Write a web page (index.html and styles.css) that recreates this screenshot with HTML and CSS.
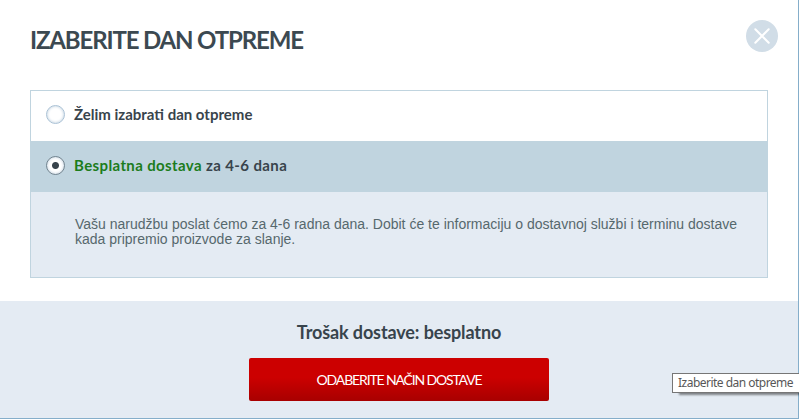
FILE: index.html
```html
<!doctype html>
<html lang="hr">
<head>
  <meta charset="UTF-8">
  <title>Izaberite dan otpreme</title>
  <link rel="stylesheet" href="styles.css">
</head>
<body>
  <form class="dialog">
    <header class="dialog-header">
      <h1>IZABERITE DAN OTPREME</h1>
      <button type="button" class="close" aria-label="Zatvori">
        <svg width="32" height="32" viewBox="0 0 32 32">
          <circle cx="16" cy="16" r="16" fill="#d1dde7"/>
          <path d="M9.3 9.3L22.7 22.7M22.7 9.3L9.3 22.7" stroke="#fff" stroke-width="2" stroke-linecap="round"/>
        </svg>
      </button>
    </header>
    <div class="options">
      <label class="option">
        <input type="radio" name="delivery">
        <span class="label-pick">Želim izabrati dan otpreme</span>
      </label>
      <label class="option selected">
        <input type="radio" name="delivery" checked>
        <span class="label-free"><span class="free">Besplatna dostava</span> za 4-6 dana</span>
      </label>
      <p class="description">Vašu narudžbu poslat ćemo za 4-6 radna dana. Dobit će te informaciju o dostavnoj službi i terminu dostave<br>kada pripremio proizvode za slanje.</p>
    </div>
    <footer class="dialog-footer">
      <div class="cost">Trošak dostave: besplatno</div>
      <button type="button" class="submit">ODABERITE NAČIN DOSTAVE</button>
    </footer>
    <div class="tooltip">Izaberite dan otpreme</div>
  </form>
</body>
</html>
```
FILE: styles.css
```css
* {
  box-sizing: border-box;
}
body {
  margin: 0;
  overflow: hidden;
  font-family: Lato, sans-serif;
  color: #38444c;
}
.dialog {
  position: relative;
  display: flex;
  flex-direction: column;
  width: 799px;
  height: 419px;
  background: #fff;
  border-right: 1px solid #85aeca;
  border-bottom: 1px solid #85aeca;
}
.dialog-header {
  display: flex;
  justify-content: space-between;
  height: 90px;
  padding: 20px 20px 0 30px;
}
h1 {
  margin: 5px 0 0;
  font-size: 24px;
  font-weight: bold;
  line-height: 30px;
  letter-spacing: -1.15px;
  white-space: nowrap;
  color: #3c4951;
}
.close {
  width: 32px;
  height: 32px;
  padding: 0;
  border: none;
  background: none;
  cursor: pointer;
}
.close svg {
  display: block;
}
.options {
  width: 738px;
  height: 188px;
  margin-left: 30px;
  border: 1px solid #c0d4df;
  background: #e4ebf3;
}
.option {
  display: flex;
  align-items: center;
  gap: 9px;
  height: 50px;
  padding: 0 15px 3px;
  background: #fff;
  font-size: 15px;
  font-weight: bold;
  line-height: 18px;
  white-space: nowrap;
  cursor: pointer;
}
.option.selected {
  height: 51px;
  padding-bottom: 2px;
  background: #c0d4df;
}
.option input {
  appearance: none;
  width: 19px;
  height: 19px;
  margin: 0;
  border: 1px solid #a9c1d5;
  border-radius: 50%;
  background: #fff;
  box-shadow: inset 0 0 3px #b4c8d9;
}
.option input:checked {
  border-color: #71838f;
  background: radial-gradient(circle, #38444c 3px, #fff 4px);
}
.label-pick {
  padding-bottom: 2px;
  letter-spacing: 0;
}
.label-free {
  padding-bottom: 1px;
  letter-spacing: 0.38px;
}
.free {
  color: #1c7c1c;
}
.description {
  margin: 0;
  padding: 25px 0 0 44px;
  font-family: "Liberation Sans", Arial, sans-serif;
  font-size: 14px;
  line-height: 15px;
  white-space: nowrap;
  color: #56686d;
}
.dialog-footer {
  display: flex;
  flex-direction: column;
  align-items: center;
  height: 117px;
  margin-top: 23px;
  padding-top: 20px;
  background: #e4ebf3;
}
.cost {
  height: 37px;
  font-size: 18px;
  font-weight: bold;
  line-height: 22px;
  letter-spacing: -0.12px;
}
.submit {
  width: 300px;
  height: 43px;
  padding: 0 0 1px;
  border: none;
  border-radius: 2px;
  background: linear-gradient(#cc0000 45%, #a80000);
  color: #fff;
  font-family: Lato, sans-serif;
  font-size: 14px;
  letter-spacing: -1.15px;
  cursor: pointer;
}
.tooltip {
  position: absolute;
  left: 672px;
  top: 373px;
  width: 130px;
  height: 20px;
  padding-left: 5px;
  border: 1px solid #767676;
  background: #fff;
  box-shadow: 6px 3px 2px -1px rgba(0, 0, 0, 0.45);
  font-family: "Noto Sans", sans-serif;
  font-size: 12px;
  line-height: 18px;
  letter-spacing: -0.52px;
  white-space: nowrap;
  color: #575757;
}
```
